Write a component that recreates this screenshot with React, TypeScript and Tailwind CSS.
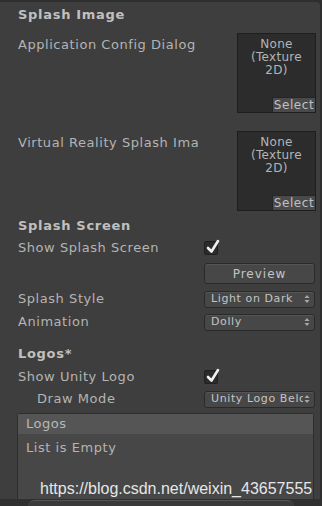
import React from "react";

const font = { fontFamily: '"DejaVu Sans", "Liberation Sans", sans-serif' };

function TextureBox() {
    return (
        <div className="relative w-[79px] h-[80px] bg-[#2c2c2c] border border-[#1e1e1e] flex flex-col items-center pt-[4px] text-[12px] leading-[13px] tracking-[0.3px] text-[#b4b4b4]">
            <span>None</span>
            <span>(Texture</span>
            <span>2D)</span>
            <div className="absolute right-0 bottom-0 w-[43px] h-[15px] bg-[#4a4a4a] border-t border-l border-[#262626] flex items-center justify-center text-[12px] tracking-[0.6px] text-[#c0c0c0]">
                Select
            </div>
        </div>
    );
}

function Check() {
    return (
        <div className="relative w-[14px] h-[14px] rounded-[2px] bg-[#2b2b2b] border border-[#1f1f1f]">
            <svg className="absolute -top-[3px] left-[1px]" width="14" height="15" viewBox="0 0 14 15">
                <path d="M2 9 L5.5 12.5 L12 2" stroke="#f0f0f0" strokeWidth="2.6" fill="none" strokeLinecap="round" strokeLinejoin="round" />
            </svg>
        </div>
    );
}

function Arrows() {
    return (
        <svg width="6" height="10" viewBox="0 0 6 10" className="shrink-0">
            <path d="M0.5 4 L3 1 L5.5 4 Z" fill="#a8a8a8" />
            <path d="M0.5 6 L3 9 L5.5 6 Z" fill="#a8a8a8" />
        </svg>
    );
}

function Dropdown({ value }: { value: string }) {
    return (
        <div className="w-[111px] h-[17px] rounded-[3px] bg-[#474747] border border-[#2a2a2a] shadow-[inset_0_1px_0_#555] flex items-center pl-[6px] pr-[4px] gap-[1px] text-[11px] tracking-[0.6px] text-[#c4c4c4] overflow-hidden">
            <span className="flex-1 whitespace-nowrap overflow-hidden">{value}</span>
            <Arrows />
        </div>
    );
}

const label = "whitespace-nowrap text-[13px] tracking-[0.55px] text-[#b4b4b4]";
const header = "pl-[18px] h-[18px] flex items-center text-[13px] font-bold tracking-[0.7px] text-[#c0c0c0]";

function Row({ text, children, indent = false, top }: { text: string; children: React.ReactNode; indent?: boolean; top: string }) {
    return (
        <div className={`flex items-center h-[18px] ${top}`}>
            <span className={`${indent ? "pl-[37px]" : "pl-[18px]"} w-[204px] ${label}`}>{text}</span>
            {children}
        </div>
    );
}

export default function App() {
    return (
        <div className="w-[322px] h-[506px] bg-[#303030] overflow-hidden" style={font}>
            <div className="relative h-[499px] bg-[#3e3e3e] border-t-2 border-r-2 border-[#2e2e2e] rounded-tr-[6px] flex flex-col">
                <div className={`${header} mt-[4px]`}>Splash Image</div>

                <div className="flex mt-[9px]">
                    <div className="w-[237px] pl-[18px]">
                        <div className={`pt-[2px] overflow-hidden ${label}`}>Application Config Dialog</div>
                    </div>
                    <TextureBox />
                </div>

                <div className="flex mt-[18px]">
                    <div className="w-[237px] pl-[18px]">
                        <div className={`w-[180px] pt-[2px] overflow-hidden ${label}`}>Virtual Reality Splash Image</div>
                    </div>
                    <TextureBox />
                </div>

                <div className={`${header} mt-[6px]`}>Splash Screen</div>

                <Row text="Show Splash Screen" top="mt-[4px]">
                    <Check />
                </Row>

                <div className="pl-[204px] mt-[6px]">
                    <div className="w-[111px] h-[21px] rounded-[3px] bg-[#474747] border border-[#2a2a2a] shadow-[inset_0_1px_0_#555] flex items-center justify-center text-[12px] tracking-[1px] text-[#c4c4c4]">Preview</div>
                </div>

                <Row text="Splash Style" top="mt-[6px]">
                    <Dropdown value="Light on Dark" />
                </Row>
                <Row text="Animation" top="mt-[5px]">
                    <Dropdown value="Dolly" />
                </Row>

                <div className={`${header} mt-[14px]`}>Logos*</div>

                <Row text="Show Unity Logo" top="mt-[5px]">
                    <Check />
                </Row>
                <Row text="Draw Mode" indent top="mt-[4px]">
                    <Dropdown value="Unity Logo Below" />
                </Row>

                <div className="ml-[17px] mr-[6px] mt-[5px] flex-1 rounded-t-[3px] bg-[#474747] border border-[#2e2e2e] border-b-0 flex flex-col">
                    <div className="h-[20px] bg-[#555555] flex items-center pl-[8px] text-[13px] tracking-[0.55px] text-[#b8b8b8]">Logos</div>
                    <div className="pl-[8px] pt-[4px] text-[13px] tracking-[0.55px] text-[#b4b4b4]">List is Empty</div>
                </div>

                <span className="absolute left-[40px] top-[475px] text-[16px] text-[#e6e6e6]" style={{ fontFamily: '"Liberation Sans", Arial, sans-serif' }}>
                    https://blog.csdn.net/weixin_43657555
                </span>
            </div>
            <div className="mx-[28px] h-[7px] mt-[1px] rounded-t-[8px] bg-[#3a3a3a] border-t border-[#555]" />
        </div>
    );
}
